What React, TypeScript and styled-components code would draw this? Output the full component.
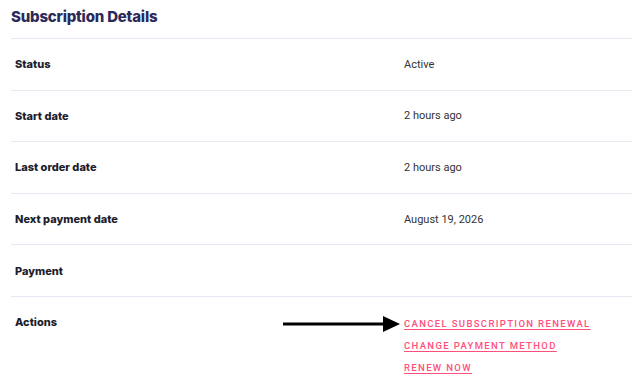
import React from "react"
import styled, { createGlobalStyle } from "styled-components"

const GlobalStyle = createGlobalStyle`
	html, body {
		margin: 0;
		padding: 0;
		background: #ffffff;
	}
`

type Row = {
	label: string
	value?: string
}

const rows: Row[] = [
	{ label: "Status", value: "Active" },
	{ label: "Start date", value: "2 hours ago" },
	{ label: "Last order date", value: "2 hours ago" },
	{ label: "Next payment date", value: "August 19, 2026" },
	{ label: "Payment", value: "" },
]

const actions = [
	"Cancel subscription renewal",
	"Change payment method",
	"Renew now",
]

const App: React.FC = () => {
	return (
		<Page>
			<GlobalStyle />
			<Title>Subscription Details</Title>
			<Table>
				<tbody>
					{rows.map(row => (
						<TableRow key={row.label}>
							<Label>{row.label}</Label>
							<Value>{row.value}</Value>
						</TableRow>
					))}
					<TableRow>
						<Label $top>Actions</Label>
						<Value $top>
							<ActionList>
								{actions.map((action, i) => (
									<ActionItem key={action}>
										{i === 0 && (
											<Arrow width="118" height="18" viewBox="0 0 118 18">
												<line x1="0" y1="9" x2="102" y2="9" stroke="#000" strokeWidth="3" />
												<polygon points="100,1 117,9 100,17" fill="#000" />
											</Arrow>
										)}
										<ActionLink href="#">{action}</ActionLink>
									</ActionItem>
								))}
							</ActionList>
						</Value>
					</TableRow>
				</tbody>
			</Table>
		</Page>
	)
}

const Page = styled.div`
	padding: 0 0 0 11px;
	width: 632px;
	box-sizing: border-box;
	overflow: hidden;
	font-family: Roboto, "Liberation Sans", sans-serif;
`

const Title = styled.h2`
	margin: 0;
	height: 38px;
	line-height: 34px;
	font-family: Inter, "Noto Sans", sans-serif;
	font-size: 15px;
	font-weight: 800;
	letter-spacing: -0.2px;
	color: #2c2a5a;
`

const Table = styled.table`
	width: 100%;
	border-collapse: collapse;
`

const TableRow = styled.tr`
	border-top: 1px solid #e8e8f3;
`

const Label = styled.th<{ $top?: boolean }>`
	width: 385px;
	padding: ${(props): string => (props.$top ? "18px 4px 0" : "0 4px")};
	height: ${(props): string => (props.$top ? "auto" : "50.6px")};
	vertical-align: ${(props): string => (props.$top ? "top" : "middle")};
	text-align: left;
	font-family: Inter, "Noto Sans", sans-serif;
	font-size: 11px;
	font-weight: 800;
	line-height: 14px;
	color: #1d1d2b;
`

const Value = styled.td<{ $top?: boolean }>`
	padding: ${(props): string => (props.$top ? "20px 0 0" : "1px 0 0")};
	vertical-align: ${(props): string => (props.$top ? "top" : "middle")};
	font-size: 11px;
	line-height: 14px;
	color: #333333;
`

const ActionList = styled.ul`
	list-style: none;
	margin: 0;
	padding: 0;
`

const ActionItem = styled.li`
	position: relative;
	height: 22px;
	line-height: 14px;
`

const ActionLink = styled.a`
	font-size: 9.5px;
	font-weight: 500;
	letter-spacing: 1.35px;
	text-transform: uppercase;
	color: #ff4f7b;
	text-decoration: underline;
	text-underline-offset: 2px;
`

const Arrow = styled.svg`
	position: absolute;
	left: -121px;
	top: -2px;
`

export default App
